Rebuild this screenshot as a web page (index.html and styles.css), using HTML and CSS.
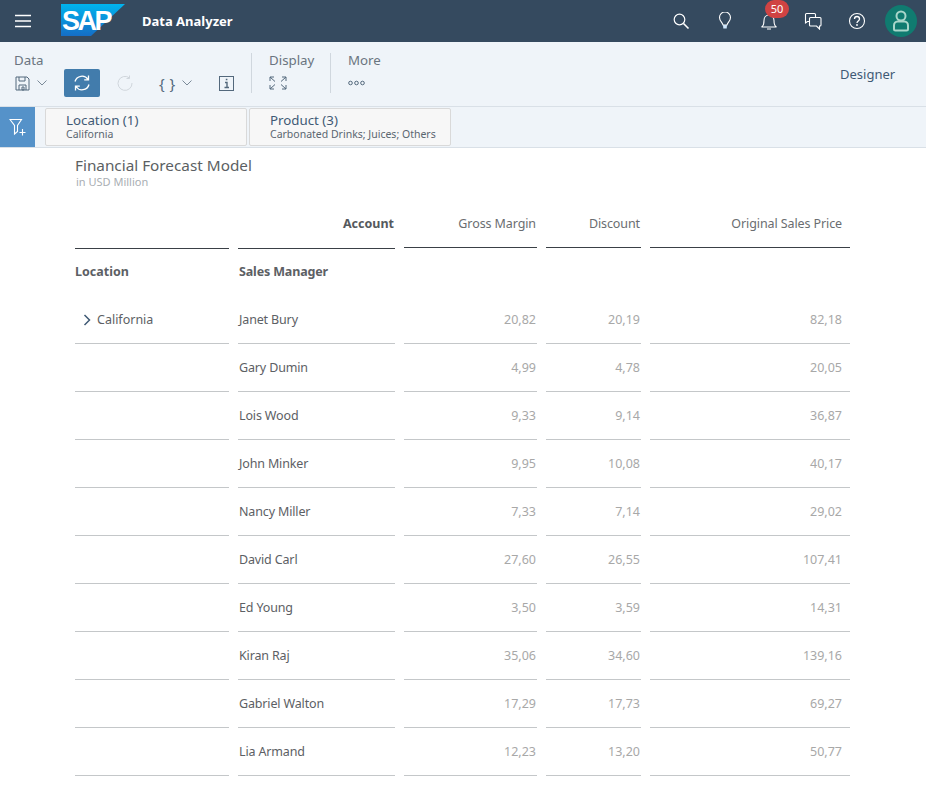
FILE: index.html
```html
<!DOCTYPE html>
<html lang="en">
<head>
<meta charset="utf-8">
<title>Data Analyzer</title>
<link rel="stylesheet" href="styles.css">
</head>
<body>
<header class="shell">
  <svg class="menu" width="18" height="14" viewBox="0 0 18 14"><path d="M1 1.500h16M1 7h16M1 12.500h16" stroke="#fff" stroke-width="1.600" fill="none"/></svg>
  <svg class="logo" width="66" height="32" viewBox="0 0 66 32">
    <defs><linearGradient id="g" x1="0" y1="0" x2="0" y2="1"><stop offset="0" stop-color="#00b4ee"/><stop offset="1" stop-color="#156ec6"/></linearGradient></defs>
    <path d="M0 0H64L30 32H0Z" fill="url(#g)"/>
    <text x="1" y="26" class="logo-text">SAP</text>
  </svg>
  <span class="app-title">Data Analyzer</span>
  <div class="shell-icons">
    <svg class="sicon" width="18" height="18" viewBox="0 0 18 18"><circle cx="7.500" cy="7.500" r="5.300" fill="none" stroke="#fff" stroke-width="1.200"/><path d="M11.500 11.500l5 5" stroke="#fff" stroke-width="1.600"/></svg>
    <svg class="sicon" width="18" height="18" viewBox="0 0 18 18"><path d="M7 13C6.500 10.500 3.500 9 3.500 5.500a5.500 5.500 0 0 1 11 0c0 3.500-3 5-3.500 7.500z" fill="none" stroke="#fff" stroke-width="1.100"/><path d="M7 13h4l-.3 3.500H7.300z" fill="#cfe6fb"/></svg>
    <div class="bell">
      <svg width="18" height="18" viewBox="0 0 18 18"><path d="M1.500 15c2-1 2.500-2.500 2.500-6.500 0-3 2-5.500 5-5.500s5 2.500 5 5.500c0 4 .5 5.500 2.500 6.500zM7 17h4" fill="none" stroke="#fff" stroke-width="1.100"/></svg>
      <span class="badge">50</span>
    </div>
    <svg class="sicon" width="18" height="18" viewBox="0 0 18 18"><path d="M5.500 9.500H3.500L1.500 11V2.500a1 1 0 0 1 1-1h8a1 1 0 0 1 1 1v3" fill="none" stroke="#fff" stroke-width="1.100"/><path d="M6.500 5.500h9.500a1 1 0 0 1 1 1v6.500a1 1 0 0 1-1 1h-.5v3l-3-3H6.500a1 1 0 0 1-1-1V6.500a1 1 0 0 1 1-1z" fill="none" stroke="#fff" stroke-width="1.100"/></svg>
    <svg class="sicon" width="18" height="18" viewBox="0 0 18 18"><circle cx="9" cy="9" r="7.500" fill="none" stroke="#fff" stroke-width="1.100"/><path d="M6.500 7c0-1.500 1.100-2.500 2.500-2.500S11.500 5.500 11.500 7c0 2-2.500 2-2.500 4" fill="none" stroke="#fff" stroke-width="1.300"/><circle cx="9" cy="13" r=".9" fill="#fff"/></svg>
    <div class="avatar">
      <svg width="20" height="22" viewBox="0 0 20 22"><circle cx="10" cy="6" r="4.500" fill="none" stroke="#a8d6ca" stroke-width="2"/><path d="M6.500 11.500h7c2 0 3.500 2 3.500 4v3.500a1.500 1.500 0 0 1-1.500 1.500h-11A1.500 1.500 0 0 1 3 19v-3.500c0-2 1.500-4 3.500-4z" fill="none" stroke="#a8d6ca" stroke-width="2"/></svg>
    </div>
  </div>
</header>

<section class="toolbar">
  <div class="tgroup group-data">
    <div class="tlabel">Data</div>
    <div class="ticons">
      <svg class="ic-save" width="15" height="15" viewBox="0 0 15 15"><path d="M1 1h11l2 2v11H1zM4 1v4h6V1M4 14V9h7v5M7 11h2v3H7z" fill="none" stroke="#53687c" stroke-width="1"/></svg>
      <svg class="chev" width="10" height="6" viewBox="0 0 10 6"><path d="M.5.500 5 5 9.500.500" fill="none" stroke="#7b8a99" stroke-width="1"/></svg>
      <span class="refresh"><svg width="18" height="18" viewBox="0 0 18 18"><path d="M2 7.500A7.200 7.200 0 0 1 15 5.500M16 10.500A7.200 7.200 0 0 1 3 12.500M15.500 1.500v4.300h-4.300M2.500 16.500v-4.300h4.300" fill="none" stroke="#fff" stroke-width="1.300"/></svg></span>
      <svg class="redo" width="16" height="16" viewBox="0 0 16 16"><path d="M12.500 3A7 7 0 1 0 15 8M12.500.500V3.500H9.500" fill="none" stroke="#d0d6dc" stroke-width="1"/></svg>
      <span class="braces">{ }</span>
      <svg class="chev" width="10" height="6" viewBox="0 0 10 6"><path d="M.5.500 5 5 9.500.500" fill="none" stroke="#7b8a99" stroke-width="1"/></svg>
      <svg class="info" width="15" height="15" viewBox="0 0 15 15"><rect x=".5" y=".5" width="14" height="14" fill="none" stroke="#53687c"/><path d="M6 6.500h2V11.500M5.500 11.500h4.500M6.800 3.500h1.600" fill="none" stroke="#53687c" stroke-width="1.400"/></svg>
    </div>
  </div>
  <div class="tgroup group-display">
    <div class="tlabel">Display</div>
    <div class="ticons">
      <svg width="18" height="14" viewBox="0 0 18 14"><path d="M1 1l5 4.500M1 1h4M1 1v4M17 1l-5 4.500M17 1h-4M17 1v4M1 13l5-4.500M1 13h4M1 13V9M17 13l-5-4.500M17 13h-4M17 13V9" fill="none" stroke="#53687c" stroke-width="1"/></svg>
    </div>
  </div>
  <div class="tgroup group-more">
    <div class="tlabel">More</div>
    <div class="ticons">
      <svg width="17" height="6" viewBox="0 0 17 6"><circle cx="2.500" cy="3" r="1.800" fill="none" stroke="#53687c"/><circle cx="8.500" cy="3" r="1.800" fill="none" stroke="#53687c"/><circle cx="14.500" cy="3" r="1.800" fill="none" stroke="#53687c"/></svg>
    </div>
  </div>
  <div class="designer">Designer</div>
</section>

<section class="filterbar">
  <div class="filter-btn"><svg width="18" height="18" viewBox="0 0 18 18"><path d="M1 1.500h11.500L8.500 7.500v6l-3 2.500V7.500z" fill="none" stroke="#fff" stroke-width="1.100"/><path d="M13.500 11v6.500M10.500 14.500h6" stroke="#fff" stroke-width="1.100"/></svg></div>
  <div class="token token-loc"><div class="token-title">Location (1)</div><div class="token-sub">California</div></div>
  <div class="token token-prod"><div class="token-title">Product (3)</div><div class="token-sub">Carbonated Drinks; Juices; Others</div></div>
</section>

<main class="content">
  <h1 class="title">Financial Forecast Model</h1>
  <div class="subtitle">in USD Million</div>
  <div class="table">
    <div class="c head-dim"></div>
    <div class="c head-dim right bold">Account</div>
    <div class="c head right">Gross Margin</div>
    <div class="c head right">Discount</div>
    <div class="c head right last">Original Sales Price</div>

    <div class="c dim bold lift">Location</div>
    <div class="c dim bold lift name">Sales Manager</div>
    <div class="c"></div><div class="c"></div><div class="c"></div>

    <div class="c line dim loc"><svg class="expand" width="8" height="12" viewBox="0 0 8 12"><path d="M1.500 1l5 5-5 5" fill="none" stroke="#3f5a75" stroke-width="1.500"/></svg>California</div>
    <div class="c line dim name">Janet Bury</div><div class="c line num">20,82</div><div class="c line num">20,19</div><div class="c line num last">82,18</div>

    <div class="c line"></div><div class="c line dim name">Gary Dumin</div><div class="c line num">4,99</div><div class="c line num">4,78</div><div class="c line num last">20,05</div>
    <div class="c line"></div><div class="c line dim name">Lois Wood</div><div class="c line num">9,33</div><div class="c line num">9,14</div><div class="c line num last">36,87</div>
    <div class="c line"></div><div class="c line dim name">John Minker</div><div class="c line num">9,95</div><div class="c line num">10,08</div><div class="c line num last">40,17</div>
    <div class="c line"></div><div class="c line dim name">Nancy Miller</div><div class="c line num">7,33</div><div class="c line num">7,14</div><div class="c line num last">29,02</div>
    <div class="c line"></div><div class="c line dim name">David Carl</div><div class="c line num">27,60</div><div class="c line num">26,55</div><div class="c line num last">107,41</div>
    <div class="c line"></div><div class="c line dim name">Ed Young</div><div class="c line num">3,50</div><div class="c line num">3,59</div><div class="c line num last">14,31</div>
    <div class="c line"></div><div class="c line dim name">Kiran Raj</div><div class="c line num">35,06</div><div class="c line num">34,60</div><div class="c line num last">139,16</div>
    <div class="c line"></div><div class="c line dim name">Gabriel Walton</div><div class="c line num">17,29</div><div class="c line num">17,73</div><div class="c line num last">69,27</div>
    <div class="c line"></div><div class="c line dim name">Lia Armand</div><div class="c line num">12,23</div><div class="c line num">13,20</div><div class="c line num last">50,77</div>
  </div>
</main>
</body>
</html>
```
FILE: styles.css
```css
* { box-sizing: border-box; }
html, body { margin: 0; padding: 0; }
body { width: 926px; height: 794px; overflow: hidden; background: #fff; font-family: "Noto Sans", "Open Sans", sans-serif; color: #32363a; }

.shell { height: 42px; background: #354a5f; display: flex; align-items: center; position: relative; }
.menu { margin-left: 14px; }
.logo { margin-left: 29px; align-self: flex-start; margin-top: 4px; }
.logo-text { font: 700 27px "Liberation Sans", sans-serif; fill: #fff; letter-spacing: -2.500px; }
.app-title { margin-left: 15px; font-size: 13px; font-weight: 700; color: #fff; }
.shell-icons { margin-left: auto; display: flex; align-items: center; padding-right: 9px; }
.sicon { margin-right: 26px; display: block; }
.bell { position: relative; width: 18px; height: 18px; margin-right: 26px; }
.bell svg { display: block; }
.badge { position: absolute; left: 5px; top: -12px; width: 24px; height: 18px; border-radius: 9px; background: #d04343; color: #fff; font-size: 11px; line-height: 18px; text-align: center; }
.avatar { width: 32px; height: 32px; border-radius: 50%; background: #107b70; display: flex; align-items: center; justify-content: center; margin-left: -7px; }

.toolbar { height: 65px; background: #eff4f9; border-bottom: 1px solid #d9e0e7; display: flex; position: relative; }
.tgroup { padding-top: 9px; }
.tlabel { font-size: 13.300px; line-height: 18px; color: #6a7580; }
.ticons { display: flex; align-items: center; height: 26px; margin-top: 1px; }
.group-data { margin-left: 14px; width: 237px; position: relative; }
.group-display { padding-left: 18px; width: 79px; position: relative; }
.group-more { padding-left: 18px; position: relative; }
.group-display::before, .group-more::before { content: ""; position: absolute; left: 0; top: 11px; height: 40px; width: 1px; background: #d0d7de; }
.ic-save { margin-left: 1px; }
.chev { margin-left: 7px; }
.refresh { width: 36px; height: 28px; background: #427cac; border-radius: 2px; margin-left: 17px; display: flex; align-items: center; justify-content: center; }
.redo { margin-left: 17px; }
.braces { margin-left: 26px; font-size: 15px; color: #53687c; white-space: pre; word-spacing: 1px; }
.braces + .chev { margin-left: 7px; }
.info { margin-left: 27px; }
.designer { position: absolute; left: 840px; top: 23px; font-size: 13px; line-height: 18px; color: #3f5a75; }

.filterbar { height: 41px; background: #eff4f9; border-bottom: 1px solid #d9e0e7; display: flex; align-items: flex-start; }
.filter-btn { width: 35px; height: 40px; background: #5592c9; display: flex; align-items: center; justify-content: center; }
.token { height: 38px; margin-top: 1px; background: #f7f7f7; border: 1px solid #d9d9d9; border-radius: 2px; padding: 3px 0 0 20px; }
.token-loc { width: 202px; margin-left: 10px; }
.token-prod { width: 202px; margin-left: 2px; }
.token-title { font-size: 13.300px; line-height: 16px; color: #3f5a75; }
.token-sub { font-size: 10.500px; line-height: 12px; color: #5a6670; white-space: nowrap; }

.content { padding: 0 0 0 75px; }
.title { margin: 7px 0 0; font-size: 15.300px; line-height: 20px; font-weight: 400; color: #5b5f63; }
.subtitle { font-size: 11px; line-height: 14px; color: #a9aeb3; margin-left: 1px; }
.table { display: grid; grid-template-columns: 154px 157px 133px 95px 200px; column-gap: 9px; grid-auto-rows: 48px; margin-top: 11px; width: 775px; }
.c { display: flex; align-items: center; font-size: 12.500px; }
.head { height: 48px; color: #6a6d70; border-bottom: 1px solid #3a4046; letter-spacing: -0.100px; }
.head-dim { height: 49px; border-bottom: 1px solid #3a4046; padding-bottom: 1px; }
.line { border-bottom: 1px solid #c4c7c9; }
.right { justify-content: flex-end; padding-right: 1px; }
.bold { font-weight: 700; color: #55595d; }
.lift { padding-bottom: 2px; }
.name { padding-left: 1px; letter-spacing: -0.150px; }
.dim { color: #5c6064; }
.num { justify-content: flex-end; padding-right: 1px; color: #a8a8a8; }
.last { padding-right: 8px; }
.loc { padding-left: 8px; }
.expand { margin-right: 6px; }
```
